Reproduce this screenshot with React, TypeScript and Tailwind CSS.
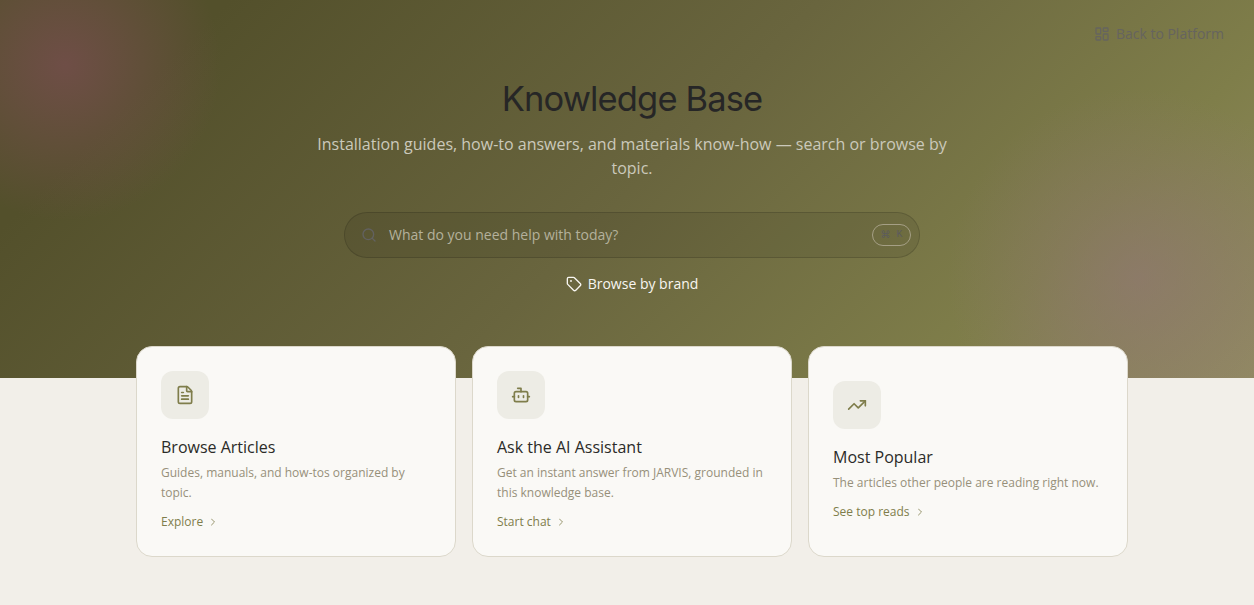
import { ReactNode } from "react"
import { Bot, ChevronRight, FileText, LayoutDashboard, Search, Tag, TrendingUp } from "lucide-react"

const cards = [
  {
    icon: FileText,
    title: "Browse Articles",
    description: "Guides, manuals, and how-tos organized by topic.",
    action: "Explore",
  },
  {
    icon: Bot,
    title: "Ask the AI Assistant",
    description: "Get an instant answer from JARVIS, grounded in this knowledge base.",
    action: "Start chat",
  },
  {
    icon: TrendingUp,
    title: "Most Popular",
    description: "The articles other people are reading right now.",
    action: "See top reads",
  },
]

function ActionCard({
  icon: Icon,
  title,
  description,
  action,
}: {
  icon: any
  title: string
  description: ReactNode
  action: string
}) {
  return (
    <button className="flex h-[211px] flex-col items-start justify-center rounded-2xl border border-[#dcd8cb] bg-[#faf9f6] px-6 text-left">
      <span className="mb-4 flex h-12 w-12 items-center justify-center rounded-xl bg-[#edece5] text-[#7f7d4b]">
        <Icon className="h-5 w-5" />
      </span>
      <span className="text-base text-[#2b2b28]">{title}</span>
      <span className="mt-1 text-xs leading-5 text-[#97907a]">{description}</span>
      <span className="mt-2 flex items-center gap-1 text-xs leading-[21px] text-[#7f7d4b]">
        {action}
        <ChevronRight className="h-3 w-3 opacity-80" />
      </span>
    </button>
  )
}

export default function App() {
  return (
    <div className="h-[605px] w-full overflow-hidden bg-[#f2efe9] font-['Open_Sans',sans-serif]">
      <div className="w-[1264px]">
        <header className="h-[378px] bg-[radial-gradient(circle_at_65px_65px,rgba(138,76,98,0.5),transparent_156px),radial-gradient(circle_at_1138px_278px,rgba(146,116,122,0.55),transparent_190px),linear-gradient(135deg,#53502b_14%,#69653e_50%,#7f7e4a_80%,#928b62_100%)]">
          <div className="flex h-[68px] items-center justify-end px-10">
            <a className="flex items-center gap-1.5 text-sm text-[#66645f]">
              <LayoutDashboard className="h-4 w-4" />
              Back to Platform
            </a>
          </div>
          <div className="mx-auto flex w-[672px] flex-col items-center pt-[11px] text-center">
            <h1 className="font-['Inter',sans-serif] text-[34.5px] leading-10 tracking-tight text-[#262626]">
              Knowledge Base
            </h1>
            <p className="mt-[13px] text-base text-[#cbc9bb]">
              Installation guides, how-to answers, and materials know-how — search or browse by topic.
            </p>
            <div className="mt-8 flex h-[46px] w-[576px] items-center rounded-full border border-black/15 bg-black/7 pr-2 pl-4">
              <Search className="h-4 w-4 text-[#626160]" />
              <span className="ml-3 flex-1 text-left text-sm text-[#b4b19c]">What do you need help with today?</span>
              <kbd className="flex h-[22px] w-[39px] items-center justify-center gap-1.5 rounded-full border border-[#a59f85] font-['DejaVu_Sans',sans-serif] text-[10px] leading-none text-[#5c5b5c]">
                <span>⌘</span>
                <span className="font-['Liberation_Mono',monospace]">K</span>
              </kbd>
            </div>
            <a className="mt-4 flex items-center gap-1.5 text-sm text-[#f8f6f1]">
              <Tag className="h-4 w-4" />
              Browse by brand
            </a>
          </div>
        </header>
        <main className="relative mx-auto -mt-8 grid w-[992px] grid-cols-3 gap-4">
          {cards.map((card) => (
            <ActionCard key={card.title} {...card} />
          ))}
        </main>
      </div>
    </div>
  )
}
